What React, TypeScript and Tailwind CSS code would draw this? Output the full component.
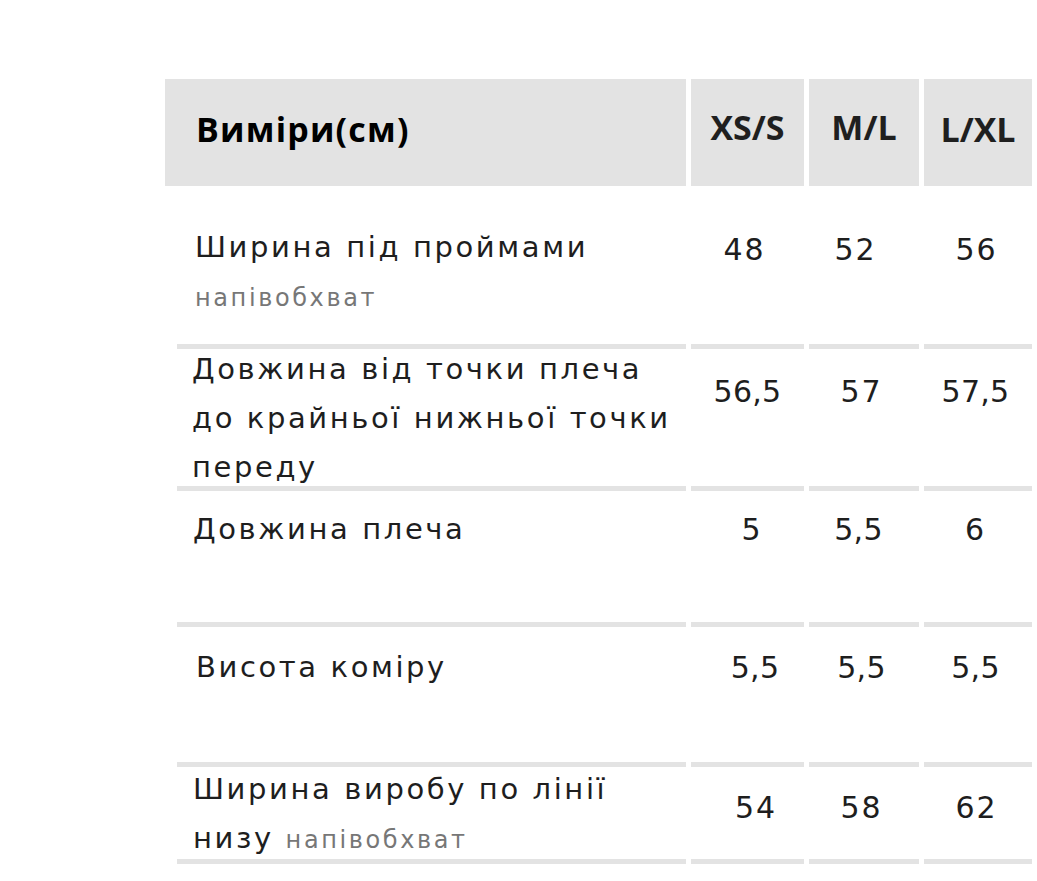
const body = { fontFamily: "'DejaVu Sans', 'Noto Sans', sans-serif" };
const head = { fontFamily: "'Open Sans', 'Noto Sans', sans-serif" };

type Row = {
  label: React.ReactNode;
  values: string[];
  shift: string[];
  h: string;
  labelCls: string;
  valPt: string;
};

const rows: Row[] = [
  {
    label: (
      <>
        Ширина під проймами
        <br />
        <span className="text-[24px] text-[#777]">напівобхват</span>
      </>
    ),
    values: ["48", "52", "56"],
    shift: ["pr-[6px]", "pr-[17px]", "pr-[3px]"],
    h: "h-[163px]",
    labelCls: "pt-[37px] pl-[18px]",
    valPt: "pt-[39px]",
  },
  {
    label: (
      <>
        Довжина від точки плеча
        <br />
        до крайньої нижньої точки
        <br />
        переду
      </>
    ),
    values: ["56,5", "57", "57,5"],
    shift: ["", "pr-[5px]", "pr-[5px]"],
    h: "h-[142px]",
    labelCls: "pl-[15px] -mt-[4px]",
    valPt: "pt-[18px]",
  },
  {
    label: <>Довжина плеча</>,
    values: ["5", "5,5", "6"],
    shift: ["pl-[9px]", "pr-[11px]", "pr-[5px]"],
    h: "h-[136px]",
    labelCls: "pt-[14px] pl-[16px]",
    valPt: "pt-[14px]",
  },
  {
    label: <>Висота коміру</>,
    values: ["5,5", "5,5", "5,5"],
    shift: ["pl-[15px]", "pr-[5px]", "pr-[5px]"],
    h: "h-[140px]",
    labelCls: "pt-[16px] pl-[19px]",
    valPt: "pt-[16px]",
  },
  {
    label: (
      <>
        Ширина виробу по лінії
        <br />
        низу <span className="text-[24px] text-[#777]">напівобхват</span>
      </>
    ),
    values: ["54", "58", "62"],
    shift: ["pl-[17px]", "pr-[5px]", "pr-[3px]"],
    h: "h-[97px]",
    labelCls: "pl-[16px] -mt-[2px]",
    valPt: "pt-[16px]",
  },
];

export default function App() {
  return (
    <div className="w-[1037px] h-[881px] bg-white overflow-hidden pt-[79px] pl-[165px]">
      <div className="grid grid-cols-[521px_113px_110px_108px] gap-x-[5px]">
        {/* header */}
        <div
          className="h-[107px] bg-[#e3e3e3] flex items-center pl-[31px] pb-[6px] text-[34px] tracking-[1.2px] font-bold text-black"
          style={head}
        >
          Виміри(см)
        </div>
        {["XS/S", "M/L", "L/XL"].map((s, i) => (
          <div
            key={s}
            className={`h-[107px] bg-[#e3e3e3] flex items-center justify-center text-[34px] font-bold text-[#1f1f1f] ${
              i === 2 ? "pb-[6px]" : "pb-[10px]"
            }`}
            style={head}
          >
            {s}
          </div>
        ))}

        {rows.map((r, i) => (
          <div key={i} className="contents">
            <div className={`${r.h} ml-[12px] border-b-[5px] border-[#e3e3e3] overflow-hidden`}>
              <div
                className={`${r.labelCls} text-[29px] leading-[49px] tracking-[2.6px] text-[#1e1e1e] whitespace-nowrap`}
                style={body}
              >
                {r.label}
              </div>
            </div>
            {r.values.map((v, j) => (
              <div
                key={j}
                className={`${r.h} border-b-[5px] border-[#e3e3e3] ${r.valPt} ${r.shift[j]} text-center text-[30px] leading-[49px] text-[#1e1e1e] ${
                  v.includes(",") ? "tracking-[0.3px]" : "tracking-[2px]"
                }`}
                style={body}
              >
                {v}
              </div>
            ))}
          </div>
        ))}
      </div>
    </div>
  );
}
